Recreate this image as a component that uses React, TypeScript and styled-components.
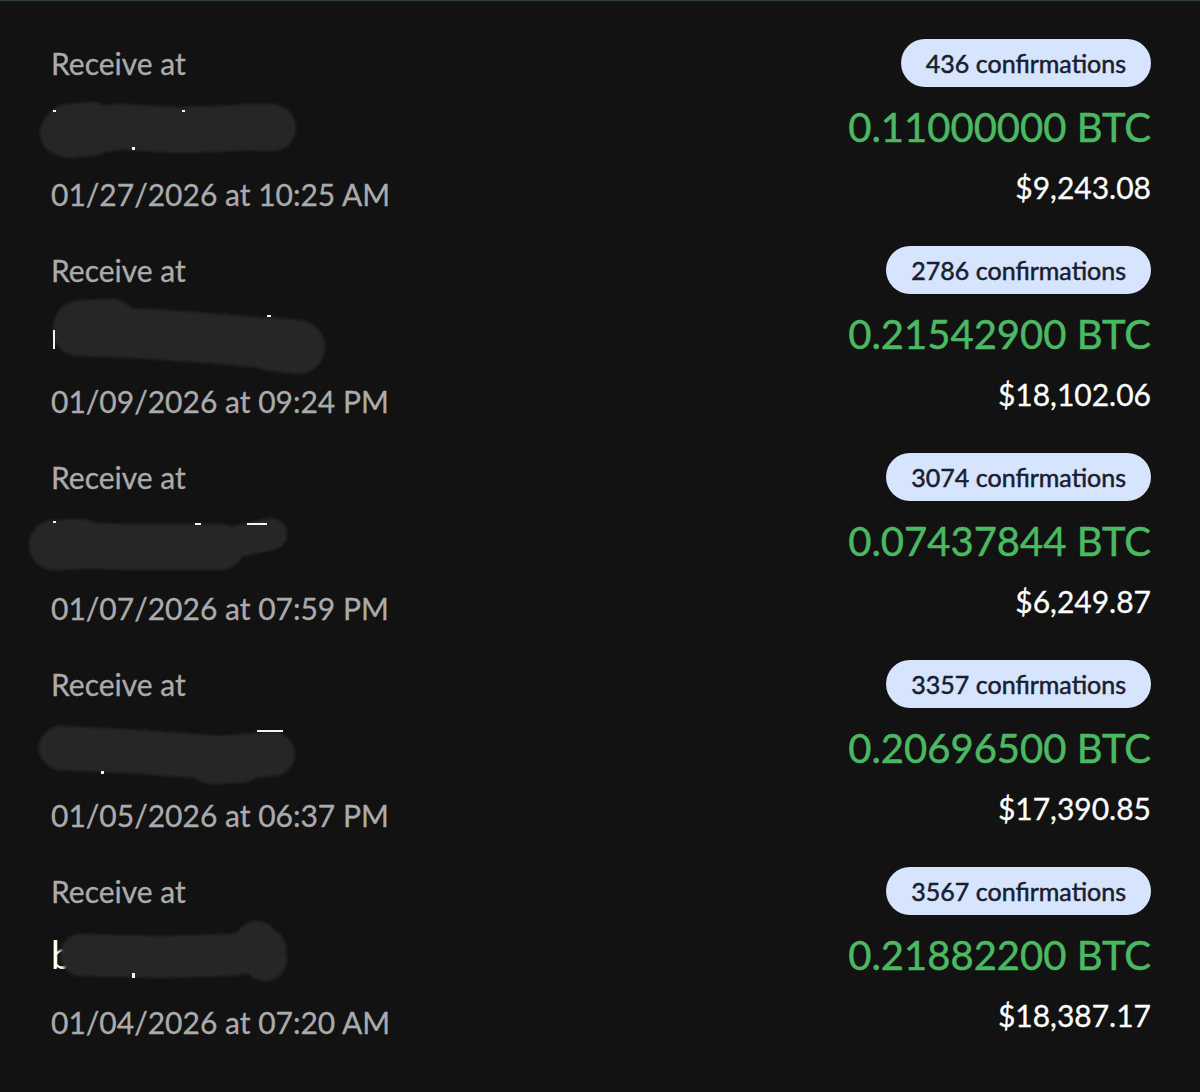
import React, { useId } from "react";
import styled, { createGlobalStyle } from "styled-components";

const Global = createGlobalStyle`
  html, body { margin: 0; padding: 0; background: #121212; }
  body { font-family: "Lato", "Noto Sans", sans-serif; }
`;

const Page = styled.div`
  min-height: 100vh;
  box-sizing: border-box;
  background: #121212;
  border-top: 1px solid #2c3f3c;
  padding: 38px 49px 0 51px;
  display: flex;
  flex-direction: column;
  gap: 28px;
`;

const Row = styled.div`
  display: flex;
  justify-content: space-between;
  align-items: flex-start;
`;

const Left = styled.div`
  display: flex;
  flex-direction: column;
`;

const Right = styled.div`
  display: flex;
  flex-direction: column;
  align-items: flex-end;
`;

const Label = styled.div`
  font-size: 30px;
  line-height: 48px;
  color: #ababab;
  -webkit-text-stroke: 0.3px #ababab;
`;

const DateText = styled.div`
  font-size: 30px;
  line-height: 48px;
  color: #ababab;
  -webkit-text-stroke: 0.3px #ababab;
`;

const AddressLine = styled.div`
  position: relative;
  height: 83px;
  box-sizing: border-box;
  padding-top: 20px;
  font-size: 38px;
  line-height: 38px;
  color: #ffffff;
`;

const Smudge = styled.svg`
  position: absolute;
  left: -30px;
  top: 0;
  width: 330px;
  height: 83px;
  overflow: visible;
`;

const Badge = styled.div`
  height: 48px;
  box-sizing: border-box;
  padding: 0 25px;
  border-radius: 24px;
  background: #d6e4fd;
  color: #182030;
  font-size: 25px;
  line-height: 48px;
  -webkit-text-stroke: 0.5px #182030;
`;

const Amount = styled.div`
  margin-top: 16px;
  font-size: 40px;
  line-height: 48px;
  color: #4bb862;
  -webkit-text-stroke: 0.5px #4bb862;
`;

const Fiat = styled.div`
  margin-top: 18px;
  font-size: 30px;
  line-height: 36px;
  color: #ffffff;
  -webkit-text-stroke: 0.3px #ffffff;
`;

type Pt = [number, number];
interface Stroke {
  pts: Pt[];
  w: number;
}
type Mark = [number, number, number, number];

interface Tx {
  confirmations: number;
  btc: string;
  usd: string;
  date: string;
  visible?: string;
  strokes: Stroke[];
  marks: Mark[];
}

const txs: Tx[] = [
  {
    confirmations: 436,
    btc: "0.11000000",
    usd: "$9,243.08",
    date: "01/27/2026 at 10:25 AM",
    strokes: [
      { pts: [[42, 46], [100, 40], [160, 43], [250, 40]], w: 46 },
      { pts: [[48, 44], [70, 42]], w: 54 },
      { pts: [[225, 40], [252, 41]], w: 46 },
    ],
    marks: [
      [32, 23, 3, 2],
      [161, 23, 3, 2],
      [111, 60, 3, 3],
    ],
  },
  {
    confirmations: 2786,
    btc: "0.21542900",
    usd: "$18,102.06",
    date: "01/09/2026 at 09:24 PM",
    strokes: [
      { pts: [[57, 37], [130, 40], [200, 45], [275, 52]], w: 50 },
      { pts: [[60, 34], [90, 33]], w: 56 },
      { pts: [[250, 50], [277, 53]], w: 54 },
    ],
    marks: [
      [32, 36, 2, 19],
      [246, 21, 4, 2],
    ],
  },
  {
    confirmations: 3074,
    btc: "0.07437844",
    usd: "$6,249.87",
    date: "01/07/2026 at 07:59 PM",
    strokes: [
      { pts: [[31, 44], [110, 46], [200, 46]], w: 46 },
      { pts: [[33, 44], [60, 43]], w: 50 },
      { pts: [[200, 44], [250, 33]], w: 32 },
    ],
    marks: [
      [32, 20, 3, 2],
      [174, 22, 6, 2],
      [226, 22, 20, 2],
    ],
  },
  {
    confirmations: 3357,
    btc: "0.20696500",
    usd: "$17,390.85",
    date: "01/05/2026 at 06:37 PM",
    strokes: [
      { pts: [[40, 40], [120, 44], [200, 50], [252, 46]], w: 44 },
      { pts: [[190, 52], [220, 51]], w: 48 },
    ],
    marks: [
      [80, 63, 3, 3],
      [236, 22, 26, 2],
    ],
  },
  {
    confirmations: 3567,
    btc: "0.21882200",
    usd: "$18,387.17",
    date: "01/04/2026 at 07:20 AM",
    visible: "b",
    strokes: [
      { pts: [[60, 40], [140, 42], [210, 40], [244, 34]], w: 42 },
      { pts: [[236, 28], [244, 44]], w: 44 },
    ],
    marks: [[111, 58, 3, 5]],
  },
];

const toPoints = (pts: Pt[]) => pts.map(([x, y]) => `${x},${y}`).join(" ");

function Redaction({ strokes, marks }: { strokes: Stroke[]; marks: Mark[] }) {
  const id = useId().replace(/:/g, "");
  return (
    <Smudge viewBox="0 0 330 83" aria-hidden>
      <defs>
        <filter
          id={`soft${id}`}
          filterUnits="userSpaceOnUse"
          x="-40"
          y="-40"
          width="420"
          height="170"
        >
          <feGaussianBlur stdDeviation="1.5" />
        </filter>
      </defs>
      <g
        filter={`url(#soft${id})`}
        fill="none"
        stroke="#262626"
        strokeLinecap="round"
        strokeLinejoin="round"
      >
        {strokes.map((s, i) => (
          <polyline key={i} points={toPoints(s.pts)} strokeWidth={s.w} />
        ))}
      </g>
      {marks.map(([x, y, w, h], i) => (
        <rect key={i} x={x} y={y} width={w} height={h} fill="#f2f2f2" />
      ))}
    </Smudge>
  );
}

export default function App() {
  return (
    <>
      <Global />
      <Page>
        {txs.map((t) => (
          <Row key={t.date}>
            <Left>
              <Label>Receive at</Label>
              <AddressLine>
                {t.visible ?? "\u00a0"}
                <Redaction strokes={t.strokes} marks={t.marks} />
              </AddressLine>
              <DateText>{t.date}</DateText>
            </Left>
            <Right>
              <Badge>{t.confirmations} confirmations</Badge>
              <Amount>{t.btc} BTC</Amount>
              <Fiat>{t.usd}</Fiat>
            </Right>
          </Row>
        ))}
      </Page>
    </>
  );
}
